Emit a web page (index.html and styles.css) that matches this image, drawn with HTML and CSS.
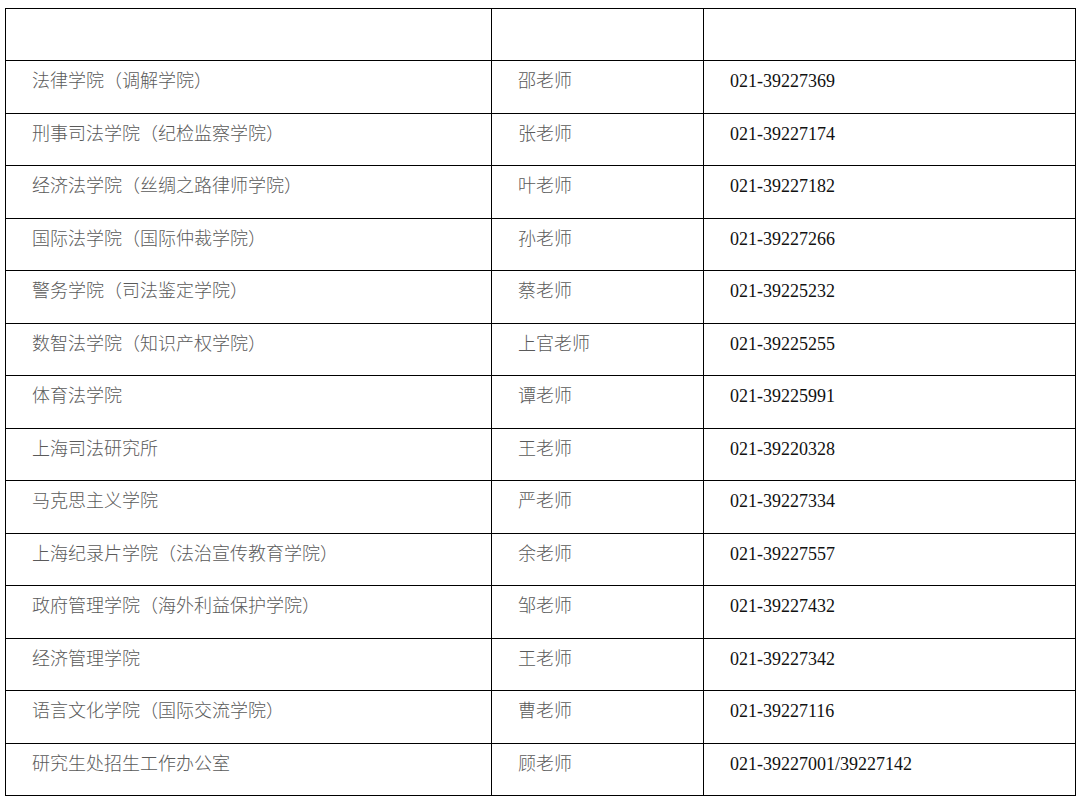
FILE: index.html
```html
<!DOCTYPE html>
<html lang="zh-CN">
<head>
<meta charset="utf-8">
<title>联系方式</title>
<link rel="stylesheet" href="styles.css">
</head>
<body>
<table class="contacts">
  <colgroup>
    <col class="c1">
    <col class="c2">
    <col class="c3">
  </colgroup>
  <thead>
    <tr class="head"><th></th><th></th><th></th></tr>
  </thead>
  <tbody>
    <tr><td class="cn">法律学院（调解学院）</td><td class="cn">邵老师</td><td class="num">021-39227369</td></tr>
    <tr><td class="cn">刑事司法学院（纪检监察学院）</td><td class="cn">张老师</td><td class="num">021-39227174</td></tr>
    <tr><td class="cn">经济法学院（丝绸之路律师学院）</td><td class="cn">叶老师</td><td class="num">021-39227182</td></tr>
    <tr><td class="cn">国际法学院（国际仲裁学院）</td><td class="cn">孙老师</td><td class="num">021-39227266</td></tr>
    <tr><td class="cn">警务学院（司法鉴定学院）</td><td class="cn">蔡老师</td><td class="num">021-39225232</td></tr>
    <tr><td class="cn">数智法学院（知识产权学院）</td><td class="cn">上官老师</td><td class="num">021-39225255</td></tr>
    <tr><td class="cn">体育法学院</td><td class="cn">谭老师</td><td class="num">021-39225991</td></tr>
    <tr><td class="cn">上海司法研究所</td><td class="cn">王老师</td><td class="num">021-39220328</td></tr>
    <tr><td class="cn">马克思主义学院</td><td class="cn">严老师</td><td class="num">021-39227334</td></tr>
    <tr><td class="cn">上海纪录片学院（法治宣传教育学院）</td><td class="cn">余老师</td><td class="num">021-39227557</td></tr>
    <tr><td class="cn">政府管理学院（海外利益保护学院）</td><td class="cn">邹老师</td><td class="num">021-39227432</td></tr>
    <tr><td class="cn">经济管理学院</td><td class="cn">王老师</td><td class="num">021-39227342</td></tr>
    <tr><td class="cn">语言文化学院（国际交流学院）</td><td class="cn">曹老师</td><td class="num">021-39227116</td></tr>
    <tr><td class="cn">研究生处招生工作办公室</td><td class="cn">顾老师</td><td class="num">021-39227001/39227142</td></tr>
  </tbody>
</table>
</body>
</html>
```

FILE: styles.css
```css
html, body {
  background: #ffffff;
}
body {
  margin: 0;
  padding: 8px 0 0 5px;
}
.contacts {
  border-collapse: collapse;
  table-layout: fixed;
  width: 1070px;
}
.c1 { width: 486px; }
.c2 { width: 212px; }
.c3 { width: 372px; }
.contacts th,
.contacts td {
  border: 1px solid #000000;
  padding: 0 0 0 26px;
  vertical-align: top;
  text-align: left;
}
.head th {
  height: 51px;
}
.contacts tbody tr {
  height: 52.5px;
}
.cn {
  font-family: "Noto Sans CJK SC", sans-serif;
  font-size: 18px;
  line-height: 24px;
  font-weight: 300;
  color: #5a5a5a;
  padding-top: 6px !important;
}
.num {
  font-family: "Liberation Serif", "Times New Roman", serif;
  font-size: 18px;
  line-height: 24px;
  color: #111111;
  padding-top: 8px !important;
}
```
